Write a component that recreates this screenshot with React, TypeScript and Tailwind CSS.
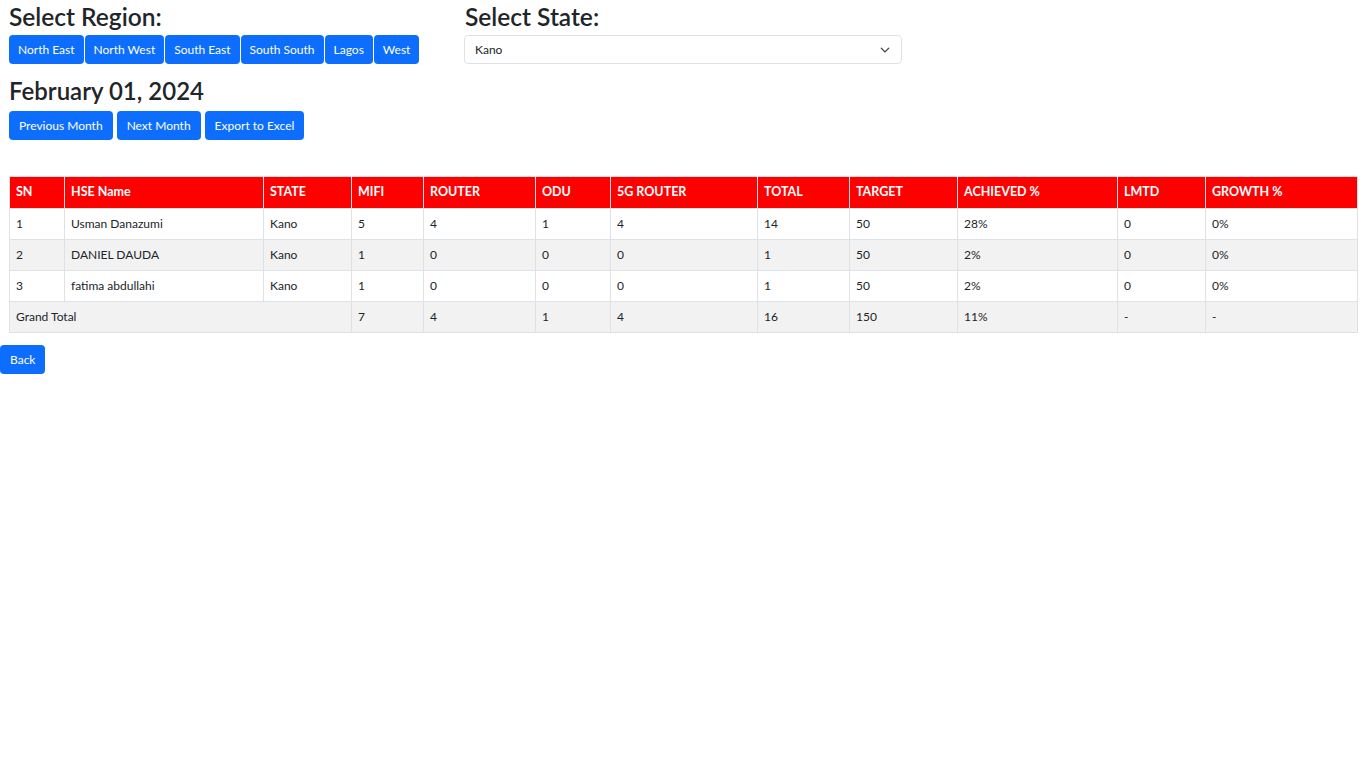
import React from 'react';

const regions = ['North East', 'North West', 'South East', 'South South', 'Lagos', 'West'];

const columns = [
  { label: 'SN', w: 'w-[55px]' },
  { label: 'HSE Name', w: 'w-[199px]' },
  { label: 'STATE', w: 'w-[88px]' },
  { label: 'MIFI', w: 'w-[72px]' },
  { label: 'ROUTER', w: 'w-[112px]' },
  { label: 'ODU', w: 'w-[75px]' },
  { label: '5G ROUTER', w: 'w-[147px]' },
  { label: 'TOTAL', w: 'w-[92px]' },
  { label: 'TARGET', w: 'w-[108px]' },
  { label: 'ACHIEVED %', w: 'w-[160px]' },
  { label: 'LMTD', w: 'w-[88px]' },
  { label: 'GROWTH %', w: 'w-[152px]' },
];

const rows = [
  ['1', 'Usman Danazumi', 'Kano', '5', '4', '1', '4', '14', '50', '28%', '0', '0%'],
  ['2', 'DANIEL DAUDA', 'Kano', '1', '0', '0', '0', '1', '50', '2%', '0', '0%'],
  ['3', 'fatima abdullahi', 'Kano', '1', '0', '0', '0', '1', '50', '2%', '0', '0%'],
];

const totals = ['7', '4', '1', '4', '16', '150', '11%', '-', '-'];

const btn =
  'h-[29px] px-[10px] rounded-[4px] bg-[#0d6efd] text-white text-[12px] leading-none whitespace-nowrap';

export default function App() {
  return (
    <div className="min-h-screen bg-white text-[#212529] font-['Lato','Noto_Sans',sans-serif]">
      <div className="px-[9px]">
        <div className="flex">
          <div className="w-[455px]">
            <h3 className="text-[24.5px] font-semibold leading-[34px] h-[35px]">Select Region:</h3>
            <div className="flex gap-px">
              {regions.map((r) => (
                <button key={r} className="h-[29px] px-[9px] rounded-[4px] bg-[#0d6efd] text-white text-[12px] leading-none whitespace-nowrap">
                  {r}
                </button>
              ))}
            </div>
          </div>
          <div className="w-[438px]">
            <h3 className="text-[24.5px] font-semibold leading-[34px] h-[35px] pl-px">Select State:</h3>
            <div className="h-[29px] border border-[#dee2e6] rounded-[4px] flex items-center justify-between pl-[10px] pr-[11px] text-[12px]">
              <span>Kano</span>
              <svg width="10" height="10" viewBox="0 0 16 16" fill="none" stroke="#343a40" strokeWidth="2" strokeLinecap="round" strokeLinejoin="round">
                <path d="m2 5 6 6 6-6" />
              </svg>
            </div>
          </div>
        </div>

        <h3 className="text-[24px] font-semibold leading-[30px] mt-[12px] mb-[5px]">February 01, 2024</h3>
        <div className="flex gap-[4px]">
          <button className={btn}>Previous Month</button>
          <button className={btn}>Next Month</button>
          <button className={btn}>Export to Excel</button>
        </div>

        <table className="mt-[36px] border-collapse table-fixed w-[1348px] text-[12px]">
          <thead>
            <tr className="h-[32px] bg-[#ff0000] text-white text-[12.5px]">
              {columns.map((c) => (
                <th key={c.label} className={`${c.w} border border-[#dee2e6] px-[6px] text-left font-bold`}>
                  {c.label}
                </th>
              ))}
            </tr>
          </thead>
          <tbody>
            {rows.map((r, i) => (
              <tr key={i} className={i % 2 === 1 ? 'h-[31px] bg-[#f2f2f2]' : 'h-[31px] bg-white'}>
                {r.map((v, j) => (
                  <td key={j} className="border border-[#dee2e6] px-[6px]">
                    {v}
                  </td>
                ))}
              </tr>
            ))}
            <tr className="h-[31px] bg-[#f2f2f2]">
              <td colSpan={3} className="border border-[#dee2e6] px-[6px]">
                Grand Total
              </td>
              {totals.map((v, j) => (
                <td key={j} className="border border-[#dee2e6] px-[6px]">
                  {v}
                </td>
              ))}
            </tr>
          </tbody>
        </table>
      </div>

      <button className={`${btn} mt-[12px]`}>Back</button>
    </div>
  );
}
